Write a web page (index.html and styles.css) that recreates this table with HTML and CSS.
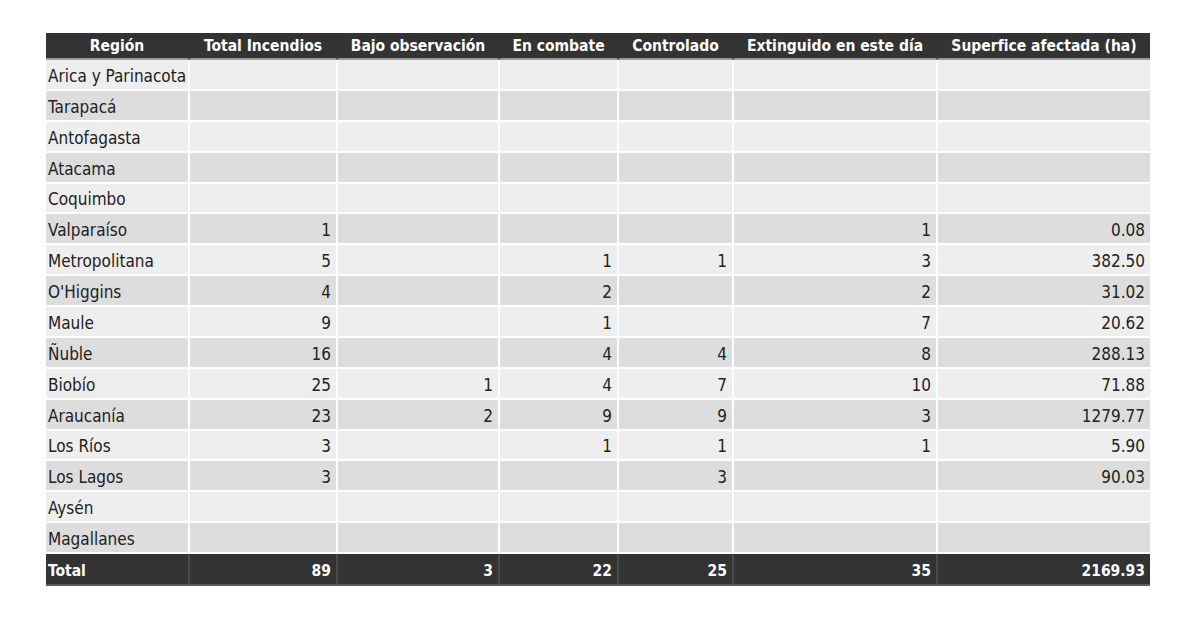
FILE: index.html
```html
<!DOCTYPE html>
<html lang="es">
<head>
<meta charset="utf-8">
<title>Incendios forestales por región</title>
<link rel="stylesheet" href="styles.css">
</head>
<body>
<table class="fires">
  <colgroup>
    <col class="c-region">
    <col class="c-total">
    <col class="c-obs">
    <col class="c-combate">
    <col class="c-control">
    <col class="c-ext">
    <col class="c-sup">
  </colgroup>
  <thead>
    <tr>
      <th>Región</th>
      <th>Total Incendios</th>
      <th>Bajo observación</th>
      <th>En combate</th>
      <th>Controlado</th>
      <th>Extinguido en este día</th>
      <th>Superfice afectada (ha)</th>
    </tr>
  </thead>
  <tbody>
    <tr><td>Arica y Parinacota</td><td></td><td></td><td></td><td></td><td></td><td></td></tr>
    <tr><td>Tarapacá</td><td></td><td></td><td></td><td></td><td></td><td></td></tr>
    <tr><td>Antofagasta</td><td></td><td></td><td></td><td></td><td></td><td></td></tr>
    <tr><td>Atacama</td><td></td><td></td><td></td><td></td><td></td><td></td></tr>
    <tr><td>Coquimbo</td><td></td><td></td><td></td><td></td><td></td><td></td></tr>
    <tr><td>Valparaíso</td><td>1</td><td></td><td></td><td></td><td>1</td><td>0.08</td></tr>
    <tr><td>Metropolitana</td><td>5</td><td></td><td>1</td><td>1</td><td>3</td><td>382.50</td></tr>
    <tr><td>O'Higgins</td><td>4</td><td></td><td>2</td><td></td><td>2</td><td>31.02</td></tr>
    <tr><td>Maule</td><td>9</td><td></td><td>1</td><td></td><td>7</td><td>20.62</td></tr>
    <tr><td>Ñuble</td><td>16</td><td></td><td>4</td><td>4</td><td>8</td><td>288.13</td></tr>
    <tr><td>Biobío</td><td>25</td><td>1</td><td>4</td><td>7</td><td>10</td><td>71.88</td></tr>
    <tr><td>Araucanía</td><td>23</td><td>2</td><td>9</td><td>9</td><td>3</td><td>1279.77</td></tr>
    <tr><td>Los Ríos</td><td>3</td><td></td><td>1</td><td>1</td><td>1</td><td>5.90</td></tr>
    <tr><td>Los Lagos</td><td>3</td><td></td><td></td><td>3</td><td></td><td>90.03</td></tr>
    <tr><td>Aysén</td><td></td><td></td><td></td><td></td><td></td><td></td></tr>
    <tr><td>Magallanes</td><td></td><td></td><td></td><td></td><td></td><td></td></tr>
  </tbody>
  <tfoot>
    <tr><td>Total</td><td>89</td><td>3</td><td>22</td><td>25</td><td>35</td><td>2169.93</td></tr>
  </tfoot>
</table>
</body>
</html>
```
FILE: styles.css
```css
html, body {
  margin: 0;
  padding: 0;
  background: #ffffff;
}

body {
  font-family: "DejaVu Sans Condensed", "DejaVu Sans", sans-serif;
  font-size: 17px;
  color: #222222;
}

.fires {
  margin: 33px 0 0 46px;
  width: 1104px;
  table-layout: fixed;
  border-collapse: separate;
  border-spacing: 0;
}

.c-region { width: 144px; }
.c-total { width: 148px; }
.c-obs { width: 162px; }
.c-combate { width: 119px; }
.c-control { width: 115px; }
.c-ext { width: 204px; }
.c-sup { width: 212px; }

.fires th {
  background: #333333;
  color: #ffffff;
  font-size: 15.5px;
  font-weight: bold;
  text-align: center;
  height: 27px;
  padding: 1px 2px 0;
  line-height: 22px;
  border-bottom: 2px solid #9a9a9a;
  border-right: 2px solid #333333;
  white-space: nowrap;
  box-sizing: border-box;
}

.fires td {
  height: 30.875px;
  padding: 3px 5px 0 2px;
  line-height: 20px;
  text-align: right;
  border-right: 2px solid #ffffff;
  border-bottom: 2px solid #ffffff;
  box-sizing: border-box;
  white-space: nowrap;
  background: #eeeeee;
}

.fires th:last-child,
.fires td:last-child {
  border-right: none;
}

.fires td:first-child {
  text-align: left;
}

.fires tbody tr:nth-child(even) td {
  background: #dddddd;
}

.fires tfoot td {
  background: #333333;
  color: #ffffff;
  font-size: 15.5px;
  font-weight: bold;
  height: 32px;
  border-right: 2px solid #4a4a4a;
  border-bottom: 2px solid #5c5c5c;
}

.fires tfoot td:last-child {
  border-right: none;
}
```
